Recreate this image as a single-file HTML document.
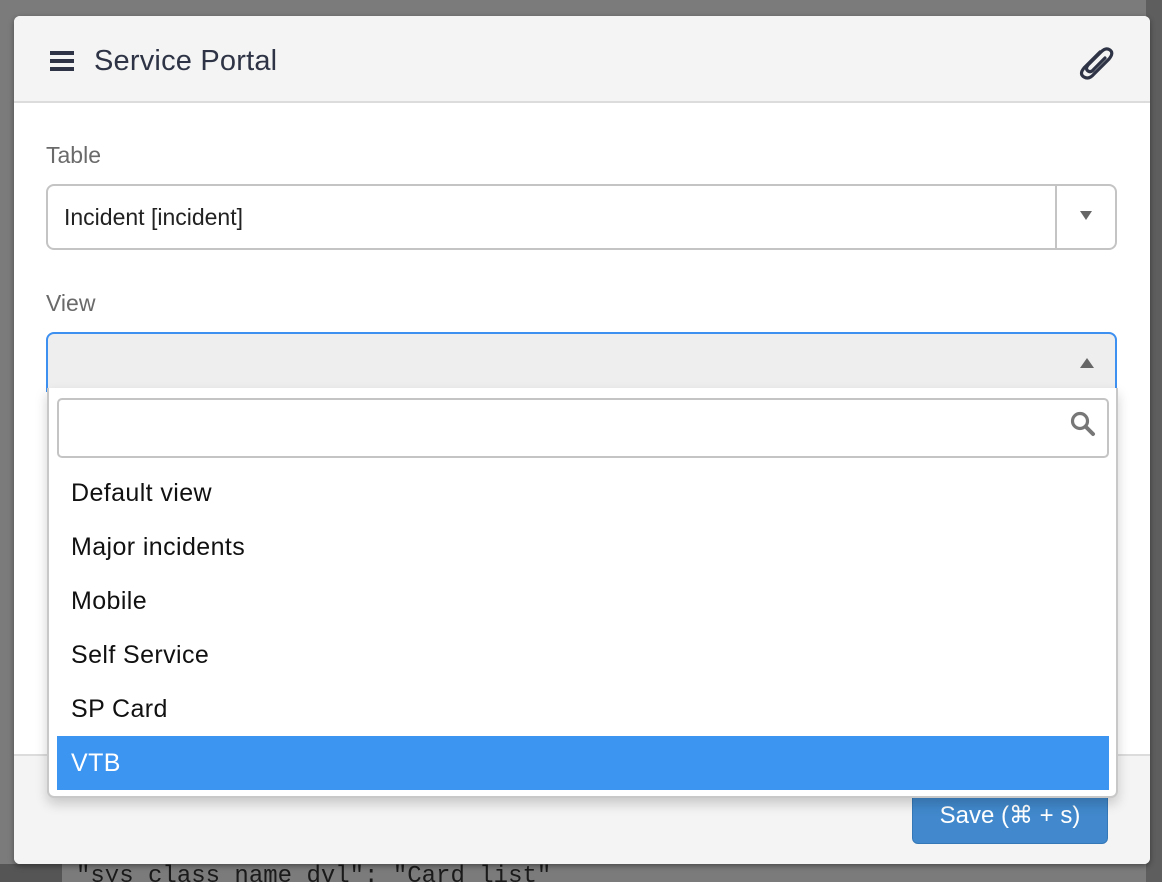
<!DOCTYPE html>
<html style="width:1162px;height:882px;overflow:hidden"><head><meta charset="utf-8"><style>
*{box-sizing:border-box;margin:0;padding:0}
body{width:1162px;height:882px;background:#7b7b7b;position:relative;overflow:hidden;font-family:"Liberation Sans",sans-serif}
.abs{position:absolute}
.modal{left:14px;top:16px;width:1136px;height:848px;background:#fff;border-radius:6px;overflow:hidden;box-shadow:0 2px 6px rgba(0,0,0,.4)}
.hdr{left:0;top:0;width:1136px;height:87px;background:#f4f4f4;border-bottom:2px solid #dcdcdc}
.title{left:80px;top:29px;font-size:29px;color:#2e3445;letter-spacing:0.2px}
.lbl{font-size:23px;color:#6a6a6a}
.ftr{left:0;top:738px;width:1136px;height:110px;background:#f4f4f4;border-top:2px solid #dcdcdc}
.item{position:absolute;left:0;width:1070px;height:54px;font-size:25px;letter-spacing:0.4px;color:#111;padding-left:22px;line-height:54px}
</style></head><body>
<div class="abs" style="left:1146px;top:0;width:16px;height:882px;background:#5e5e5e"></div>
<div class="abs" style="left:0;top:864px;width:62px;height:18px;background:#555"></div>
<div class="abs" style="left:76px;top:862px;height:20px;overflow:hidden;font-family:'Liberation Mono',monospace;font-size:24px;color:#1a1a1a;line-height:30px;white-space:nowrap">"sys_class_name_dvl": "Card list"</div>
<div class="abs modal">
 <div class="abs hdr">
  <div class="abs" style="left:36px;top:35px;width:24px;height:4px;background:#2e3445;box-shadow:0 8px 0 #2e3445,0 16px 0 #2e3445"></div>
  <div class="abs title">Service Portal</div>
  <svg class="abs" style="left:1062px;top:28px" width="42" height="36" viewBox="0 0 42 36"><path d="M24 8 L8 24 Q3 30 8 33 Q13 36 18 30 L33 15 Q38 9 34 6 Q30 3 25 8 L12 21 Q9 25 12 27 Q15 29 18 25 L29 14" fill="none" stroke="#2e3445" stroke-width="3.2" stroke-linecap="round"/></svg>
 </div>
 <div class="abs lbl" style="left:32px;top:126px">Table</div>
 <div class="abs" style="left:32px;top:168px;width:1071px;height:66px;border:2px solid #c4c4c4;border-radius:8px"></div>
 <div class="abs" style="left:1041px;top:170px;width:2px;height:62px;background:#c4c4c4"></div>
 <div class="abs" style="left:1066px;top:195px;width:0;height:0;border-left:6px solid transparent;border-right:6px solid transparent;border-top:9px solid #666"></div>
 <div class="abs" style="left:50px;top:188px;font-size:23px;color:#222">Incident [incident]</div>
 <div class="abs lbl" style="left:32px;top:274px">View</div>
 <div class="abs" style="left:32px;top:316px;width:1071px;height:60px;border:2px solid #3d8ff0;border-bottom:none;border-radius:8px 8px 0 0;background:#eeeeee"></div>
 <div class="abs" style="left:1066px;top:342px;width:0;height:0;border-left:7px solid transparent;border-right:7px solid transparent;border-bottom:10px solid #666"></div>
 <div class="abs ftr"></div>
 <div class="abs" style="left:898px;top:774px;width:196px;height:54px;background:#4189cc;border:1px solid #3578b8;border-radius:6px;color:#fff;font-size:24px;text-align:center;line-height:50px">Save (⌘ + s)</div>
 <div class="abs" style="left:33px;top:372px;width:1071px;height:410px;background:#fff;border:2px solid #c8c8c8;border-top:none;border-radius:0 0 7px 7px;box-shadow:0 6px 12px rgba(0,0,0,.18)">
  <div class="abs" style="left:8px;top:10px;width:1052px;height:60px;border:2px solid #c4c4c4;border-radius:5px"></div>
  <svg class="abs" style="left:1020px;top:22px" width="28" height="28" viewBox="0 0 28 28"><circle cx="11" cy="11" r="7.5" fill="none" stroke="#777" stroke-width="3.2"/><path d="M16.5 16.5 L24 24" stroke="#777" stroke-width="4" stroke-linecap="round"/></svg>
  <div class="item" style="top:78px">Default view</div>
  <div class="item" style="top:132px">Major incidents</div>
  <div class="item" style="top:186px">Mobile</div>
  <div class="item" style="top:240px">Self Service</div>
  <div class="item" style="top:294px">SP Card</div>
  <div class="item" style="top:348px;left:8px;width:1052px;background:#3d95f2;color:#fff;padding-left:14px">VTB</div>
 </div>
</div>
</body></html>
